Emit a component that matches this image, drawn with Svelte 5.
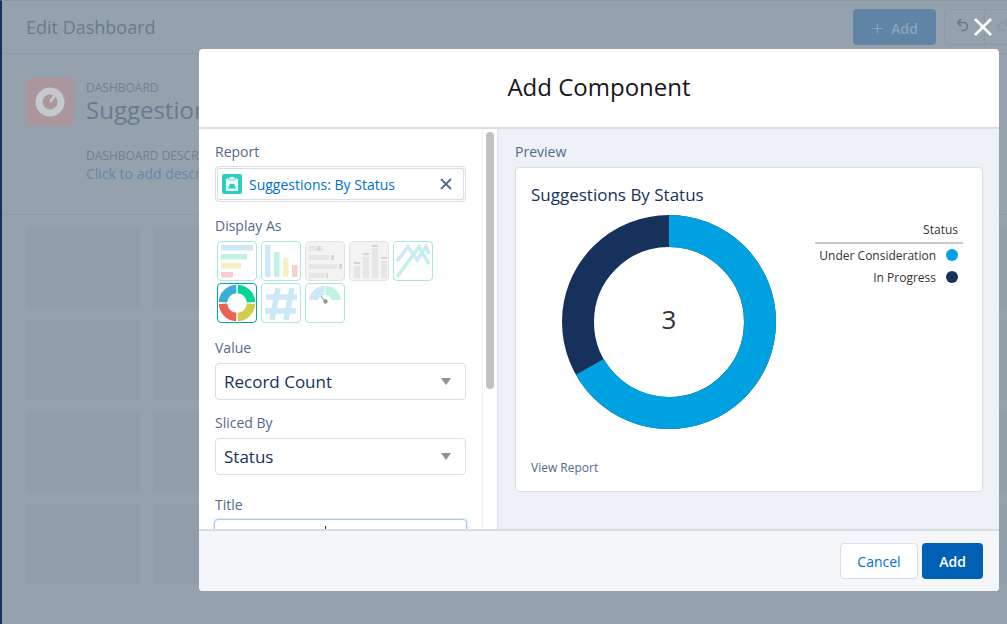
<script lang="ts">
  const tiles = Array.from({ length: 32 });
  const r = 91;
  const circ = 2 * Math.PI * r;
</script>

<div class="page">
  <header class="topbar">
    <h1>Edit Dashboard</h1>
    <div class="top-actions">
      <button class="top-add"><span class="plus">+</span> Add</button>
      <button class="top-icon" aria-label="Undo">
        <svg width="14" height="14" viewBox="0 0 14 14"><path d="M5 1 1.500 4.500 5 8M2 4.500h5.500a4 4 0 0 1 0 8H5" fill="none" stroke="#69788c" stroke-width="1.600"/></svg>
      </button>
      <button class="top-icon" aria-label="Redo">
        <svg width="14" height="14" viewBox="0 0 14 14"><path d="M9 1l3.500 3.500L9 8M12 4.500H6.500a4 4 0 0 0 0 8H9" fill="none" stroke="#8a98a4" stroke-width="1.600"/></svg>
      </button>
    </div>
  </header>
  <section class="info">
    <div class="dash-icon">
      <svg width="30" height="30" viewBox="0 0 30 30">
        <circle cx="15" cy="15" r="11" fill="none" stroke="#c4c9cf" stroke-width="7" />
        <path d="M20 8 15 15" stroke="#c4c9cf" stroke-width="2.500" />
      </svg>
    </div>
    <div class="dash-text">
      <div class="eyebrow">DASHBOARD</div>
      <div class="dash-name">Suggestions</div>
      <div class="eyebrow desc">DASHBOARD DESCRIPTION</div>
      <div class="desc-link">Click to add description</div>
    </div>
  </section>
  <div class="tiles">
    {#each tiles as _}
      <div class="tile"></div>
    {/each}
  </div>
</div>

<button class="close" aria-label="Close">
  <svg width="20" height="20" viewBox="0 0 20 20"><path d="M2 2 18 18M18 2 2 18" stroke="#fff" stroke-width="2.600" /></svg>
</button>

<div class="modal">
  <div class="modal-head">Add Component</div>
  <div class="modal-body">
    <div class="form">
      <div class="label first">Report</div>
      <div class="pill">
        <span class="pill-icon">
          <svg width="12" height="14" viewBox="0 0 12 14">
            <rect x="0" y="1.500" width="12" height="12.500" rx="1" fill="#e8f8f5" />
            <rect x="3" y="0" width="6" height="3" fill="#e8f8f5" stroke="#2fcdbb" stroke-width=".6" />
            <path d="M3.500 9V7h5v2h1v2.500h-7V9z" fill="#2fcdbb" />
          </svg>
        </span>
        <span class="pill-text">Suggestions: By Status</span>
        <svg class="pill-x" width="12" height="12" viewBox="0 0 12 12"><path d="M1 1 11 11M11 1 1 11" stroke="#54698d" stroke-width="1.800" /></svg>
      </div>

      <div class="label display">Display As</div>
      <div class="charts">
        <div class="chart">
          <svg viewBox="0 0 38 38">
            <rect x="3" y="3" width="32" height="5.500" fill="#cde8f6" />
            <rect x="3" y="12" width="26" height="5.500" fill="#c0f3e4" />
            <rect x="3" y="21" width="20" height="5.500" fill="#f3f0c4" />
            <rect x="3" y="30" width="12" height="5.500" fill="#f9cfcb" />
          </svg>
        </div>
        <div class="chart">
          <svg viewBox="0 0 38 38">
            <rect x="3" y="3" width="5.500" height="32" fill="#cde8f6" />
            <rect x="12" y="10" width="5.500" height="25" fill="#c0f3e4" />
            <rect x="21" y="16" width="5.500" height="19" fill="#f3f0c4" />
            <rect x="30" y="23" width="5.500" height="12" fill="#f9cfcb" />
          </svg>
        </div>
        <div class="chart off">
          <svg viewBox="0 0 38 38">
            <g fill="#e6e6e6">
              <rect x="3" y="4" width="14" height="5" /><rect x="3" y="13" width="20" height="5" />
              <rect x="3" y="22" width="28" height="5" /><rect x="3" y="31" width="16" height="5" />
            </g>
            <g fill="#d6d6d6">
              <rect x="12" y="4" width="2" height="5" /><rect x="25" y="13" width="3" height="5" />
              <rect x="33" y="22" width="3" height="5" /><rect x="20" y="31" width="2" height="5" />
            </g>
          </svg>
        </div>
        <div class="chart off">
          <svg viewBox="0 0 38 38">
            <g fill="#e6e6e6">
              <rect x="4" y="24" width="6" height="12" /><rect x="13" y="15" width="6" height="21" />
              <rect x="22" y="6" width="6" height="30" /><rect x="31" y="19" width="6" height="17" />
            </g>
            <g fill="#d6d6d6">
              <rect x="4" y="20" width="6" height="2" /><rect x="13" y="11" width="6" height="2" />
              <rect x="22" y="3" width="6" height="2" /><rect x="31" y="15" width="6" height="2" />
            </g>
          </svg>
        </div>
        <div class="chart">
          <svg viewBox="0 0 38 38" fill="none" stroke-width="3.500">
            <path d="M3 35 25 5l10 17" stroke="#c0f3e4" />
            <path d="M3 19 14 5l9 13 9-13.500L35 12" stroke="#cde8f6" />
          </svg>
        </div>
        <div class="chart active">
          <svg viewBox="0 0 38 38" fill="none" stroke-width="8.500">
            <path d="M5 18.200A14 14 0 0 1 18.200 5" stroke="#3aaed8" />
            <path d="M19.800 5A14 14 0 0 1 33 18.200" stroke="#04d69a" />
            <path d="M33 19.800A14 14 0 0 1 19.800 33" stroke="#d2cc4f" />
            <path d="M18.200 33A14 14 0 0 1 5 19.800" stroke="#ea6356" />
          </svg>
        </div>
        <div class="chart">
          <svg viewBox="0 0 38 38" fill="none" stroke="#cde8f6" stroke-width="5.500">
            <path d="M16 4 10 36M30 4l-6 32M4 13h31M3 27h31" />
          </svg>
        </div>
        <div class="chart">
          <svg viewBox="0 0 38 38">
            <path d="M3 16A16 16 0 0 1 18.500 2v9A8 8 0 0 0 12 16z" fill="#cde8f6" />
            <path d="M19.500 2A16 16 0 0 1 35 16h-9a8 8 0 0 0-6.500-5z" fill="#c0f3e4" />
            <path d="m15 12 4 5" stroke="#999" stroke-width="1.200" />
            <circle cx="19.500" cy="17.500" r="2.200" fill="#999" />
          </svg>
        </div>
      </div>

      <div class="label value">Value</div>
      <div class="select">Record Count<span class="caret"></span></div>
      <div class="label sliced">Sliced By</div>
      <div class="select">Status<span class="caret"></span></div>
      <div class="label title">Title</div>
      <div class="title-input"><span class="cursor"></span></div>
    </div>

    <div class="scroll"><div class="thumb"></div></div>

    <div class="preview">
      <div class="label first">Preview</div>
      <div class="card">
        <div class="card-title">Suggestions By Status</div>
        <div class="card-main">
          <svg class="donut" width="214" height="214" viewBox="0 0 214 214">
            <g transform="rotate(-90 107 107)" fill="none" stroke-width="32">
              <circle cx="107" cy="107" {r} stroke="#16325c" />
              <circle cx="107" cy="107" {r} stroke="#00a1e0" stroke-dasharray="{circ * 2 / 3} {circ}" />
            </g>
            <text x="107" y="104" text-anchor="middle" dominant-baseline="central" class="donut-num">3</text>
          </svg>
          <div class="legend">
            <div class="legend-head">Status</div>
            <div class="legend-row">Under Consideration<span class="dot blue"></span></div>
            <div class="legend-row">In Progress<span class="dot navy"></span></div>
          </div>
        </div>
        <div class="view-report">View Report</div>
      </div>
    </div>
  </div>
  <div class="modal-foot">
    <button class="cancel">Cancel</button>
    <button class="add">Add</button>
  </div>
</div>

<style>
  :global(body) {
    margin: 0;
    background: #95a2ad;
    font-family: "Open Sans", "Liberation Sans", sans-serif;
    overflow: hidden;
  }

  button {
    font-family: inherit;
  }

  .page {
    height: 624px;
    box-sizing: border-box;
    border-left: 2px solid #16325c;
    border-top: 1px solid #8b98a3;
    background: #95a2ad;
    overflow: hidden;
  }

  .topbar {
    height: 53px;
    box-sizing: border-box;
    padding: 8px 0 0 24px;
    display: flex;
    justify-content: space-between;
    border-bottom: 1px solid #8e9ba7;
  }

  .topbar h1 {
    margin: 0;
    font-size: 18px;
    font-weight: 400;
    line-height: 36px;
    color: #6a7a8e;
  }

  .top-actions {
    display: flex;
    margin-right: -18px;
    height: 36px;
  }

  .top-add {
    width: 83px;
    margin-right: 8px;
    border: 0;
    border-radius: 4px;
    background: #6084a6;
    color: #8ba3bb;
    font-size: 14px;
    font-weight: 600;
  }

  .plus {
    font-size: 22px;
    font-weight: 300;
    vertical-align: -2px;
    margin-right: 4px;
  }

  .top-icon {
    width: 41px;
    padding: 0 0 0 11px;
    text-align: left;
    background: #95a2ad;
    border: 1px solid #8e9ba7;
    border-radius: 4px 0 0 4px;
  }

  .top-icon + .top-icon {
    border-radius: 0;
    margin-left: -1px;
  }

  .info {
    height: 161px;
    box-sizing: border-box;
    padding: 24px 24px 0;
    display: flex;
    gap: 12px;
    border-bottom: 1px solid #8e9ba7;
  }

  .dash-icon {
    width: 48px;
    height: 48px;
    border-radius: 4px;
    background: #ab969e;
    display: flex;
    align-items: center;
    justify-content: center;
    flex: none;
  }

  .dash-text {
    margin-top: 2px;
  }

  .eyebrow {
    font-size: 12px;
    line-height: 15px;
    color: #737f90;
    white-space: nowrap;
  }

  .dash-name {
    font-size: 24px;
    line-height: 30px;
    color: #6a7a8e;
    white-space: nowrap;
  }

  .desc {
    margin-top: 23px;
  }

  .desc-link {
    font-size: 14px;
    line-height: 22px;
    color: #6489ab;
    white-space: nowrap;
  }

  .tiles {
    display: grid;
    grid-template-columns: repeat(8, 114px);
    grid-auto-rows: 80px;
    gap: 12px 13px;
    padding: 13px 24px;
  }

  .tile {
    background: #919ea9;
  }

  .close {
    position: absolute;
    left: 973px;
    top: 17px;
    padding: 0;
    border: 0;
    background: none;
    line-height: 0;
  }

  .modal {
    position: absolute;
    left: 199px;
    top: 49px;
    width: 800px;
    height: 542px;
    border-radius: 4px;
    background: #fff;
    overflow: hidden;
    display: flex;
    flex-direction: column;
  }

  .modal-head {
    height: 80px;
    flex: none;
    box-sizing: border-box;
    border-bottom: 2px solid #d8dde6;
    text-align: center;
    font-size: 24px;
    line-height: 76px;
    color: #16161d;
  }

  .modal-body {
    height: 400px;
    flex: none;
    display: flex;
    overflow: hidden;
  }

  .form {
    width: 283px;
    flex: none;
    box-sizing: border-box;
    padding: 0 16px;
  }

  .label {
    font-size: 14px;
    line-height: 20px;
    color: #54698d;
    white-space: nowrap;
  }

  .first {
    margin-top: 13px;
  }

  .pill {
    margin-top: 4px;
    height: 36px;
    box-sizing: border-box;
    padding: 0 13px 0 6px;
    border: 1px solid #d8dde6;
    border-radius: 4px;
    box-shadow: inset 0 0 0 1px #fff, inset 0 0 0 2px #d8dde6;
    display: flex;
    align-items: center;
    gap: 7px;
  }

  .pill-icon {
    width: 20px;
    height: 20px;
    border-radius: 2px;
    background: #2fcdbb;
    display: flex;
    align-items: center;
    justify-content: center;
    flex: none;
  }

  .pill-text {
    flex: 1;
    font-size: 14px;
    color: #0070d2;
    white-space: nowrap;
  }

  .display {
    margin-top: 14px;
  }

  .charts {
    margin: 5px 0 0 2px;
    display: grid;
    grid-template-columns: repeat(5, 40px);
    grid-auto-rows: 40px;
    gap: 2px 4px;
  }

  .chart {
    box-sizing: border-box;
    border: 1px solid #a9e7e1;
    border-radius: 4px;
    background: #fff;
    line-height: 0;
  }

  .chart svg {
    width: 38px;
    height: 38px;
    filter: blur(0.5px);
  }

  .chart.off {
    border-color: #e4e4e4;
    background: #f3f3f3;
  }

  .chart.active {
    border-color: #04a8a0;
  }

  .value {
    margin-top: 15px;
  }

  .select {
    margin-top: 5px;
    height: 37px;
    box-sizing: border-box;
    padding: 0 14px 0 8px;
    border: 1px solid #d8dde6;
    border-radius: 4px;
    display: flex;
    align-items: center;
    justify-content: space-between;
    font-size: 17px;
    color: #16325c;
  }

  .caret {
    border-left: 5px solid transparent;
    border-right: 5px solid transparent;
    border-top: 7px solid #919191;
  }

  .sliced {
    margin-top: 13px;
  }

  .title {
    margin-top: 20px;
  }

  .title-input {
    margin: 4px 0 0 -1px;
    height: 34px;
    width: 253px;
    box-sizing: border-box;
    border: 1px solid #a6c8ea;
    border-radius: 4px;
    box-shadow: 0 0 2px #8cbcec;
    position: relative;
  }

  .cursor {
    position: absolute;
    left: 110px;
    top: 6px;
    width: 1px;
    height: 6px;
    background: #16325c;
  }

  .scroll {
    width: 17px;
    flex: none;
    padding: 3px 0 0 3px;
    box-sizing: border-box;
    border-left: 1px solid #eef1f6;
    border-right: 2px solid #e6e9ef;
  }

  .thumb {
    width: 8px;
    height: 257px;
    border-radius: 4px;
    background: #c1c1c1;
  }

  .preview {
    flex: 1;
    padding: 0 16px;
    background: #eef1f6;
  }

  .card {
    margin-top: 5px;
    height: 325px;
    box-sizing: border-box;
    border: 1px solid #d8dde6;
    border-radius: 4px;
    background: #fff;
    padding: 16px 15px 0;
    position: relative;
  }

  .card-title {
    font-size: 17px;
    line-height: 22px;
    color: #16325c;
  }

  .card-main {
    display: flex;
    margin-top: 9px;
    padding-left: 31px;
  }

  .donut-num {
    font-size: 26px;
    fill: #333;
  }

  .legend {
    margin: 5px 0 0 39px;
    width: 148px;
    font-size: 12px;
    color: #333;
    text-align: right;
    white-space: nowrap;
  }

  .legend-head {
    line-height: 16px;
    padding: 2px 5px 4px 0;
    border-bottom: 2px solid #c8c8c8;
  }

  .legend-row {
    height: 22px;
    display: flex;
    align-items: center;
    justify-content: flex-end;
    gap: 10px;
    padding-right: 5px;
  }

  .dot {
    width: 12px;
    height: 12px;
    border-radius: 50%;
  }

  .blue {
    background: #00a1e0;
  }

  .navy {
    background: #16325c;
  }

  .view-report {
    position: absolute;
    left: 15px;
    bottom: 14px;
    font-size: 12px;
    line-height: 18px;
    color: #54698d;
  }

  .modal-foot {
    flex: 1;
    box-sizing: border-box;
    border-top: 2px solid #d8dde6;
    background: #f4f6f9;
    padding: 12px 16px 0 0;
    display: flex;
    justify-content: flex-end;
    gap: 4px;
  }

  .modal-foot button {
    height: 36px;
    border-radius: 4px;
    font-size: 14px;
  }

  .cancel {
    width: 78px;
    background: #fff;
    border: 1px solid #d8dde6;
    color: #0070d2;
  }

  .add {
    width: 61px;
    background: #0060b6;
    border: 0;
    color: #fff;
    font-weight: 600;
  }
</style>
